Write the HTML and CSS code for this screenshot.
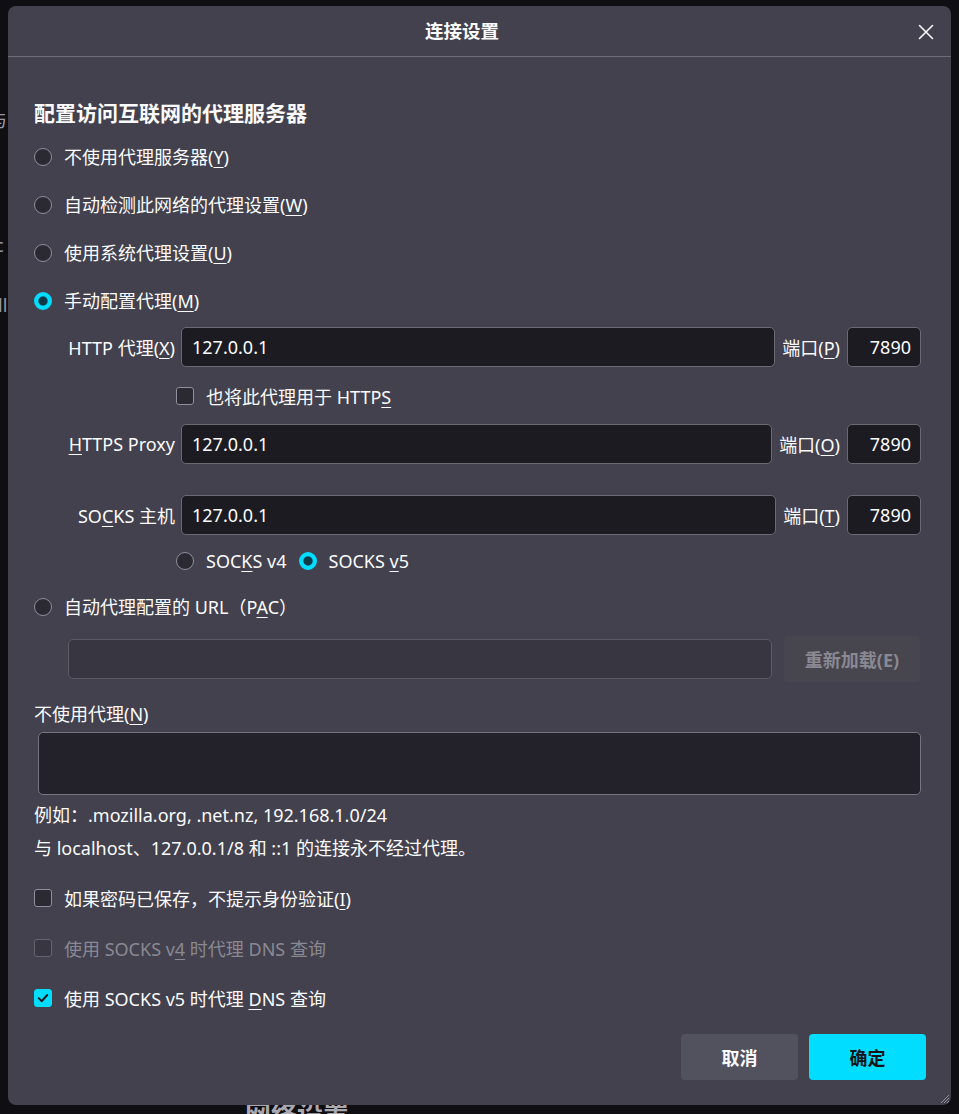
FILE: index.html
```html
<!DOCTYPE html>
<html lang="zh-CN">
<head>
<meta charset="utf-8">
<title>连接设置</title>
<link rel="stylesheet" href="styles.css">
</head>
<body>
<div class="page">
  <div class="bg-line bg-l1">与</div>
  <div class="bg-line bg-l2">c</div>
  <div class="bg-line bg-l3">ll</div>
  <div class="page-title">网络设置</div>
</div>

<div class="dialog">
  <header class="dlg-head">
    <span class="dlg-title">连接设置</span>
    <span class="close" aria-label="关闭">
      <svg width="16" height="16" viewBox="0 0 16 16"><path d="M1.5 1.5 L14.5 14.5 M14.5 1.5 L1.5 14.5" stroke="#fbfbfe" stroke-width="1.6" stroke-linecap="round" fill="none"/></svg>
    </span>
  </header>

  <div class="dlg-body">
    <h2 class="heading">配置访问互联网的代理服务器</h2>

    <div class="opt first"><span class="radio"></span><span>不使用代理服务器(<u>Y</u>)</span></div>
    <div class="opt"><span class="radio"></span><span>自动检测此网络的代理设置(<u>W</u>)</span></div>
    <div class="opt"><span class="radio"></span><span>使用系统代理设置(<u>U</u>)</span></div>
    <div class="opt"><span class="radio checked"></span><span>手动配置代理(<u>M</u>)</span></div>

    <div class="proxy">
      <div class="prow r-http">
        <span class="plabel">HTTP 代理(<u>X</u>)</span>
        <div class="field">127.0.0.1</div>
        <span class="portlabel">端口(<u>P</u>)</span>
        <div class="field port">7890</div>
      </div>
      <div class="subrow r-also">
        <span class="check"></span><span>也将此代理用于 HTTP<u>S</u></span>
      </div>
      <div class="prow r-https">
        <span class="plabel"><u>H</u>TTPS Proxy</span>
        <div class="field">127.0.0.1</div>
        <span class="portlabel">端口(<u>O</u>)</span>
        <div class="field port">7890</div>
      </div>
      <div class="prow r-socks">
        <span class="plabel">SO<u>C</u>KS 主机</span>
        <div class="field">127.0.0.1</div>
        <span class="portlabel">端口(<u>T</u>)</span>
        <div class="field port">7890</div>
      </div>
      <div class="subrow r-ver">
        <span class="radio"></span><span>SOC<u>K</u>S v4</span>
        <span class="radio checked v5"></span><span>SOCKS <u>v</u>5</span>
      </div>
    </div>

    <div class="opt r-pac"><span class="radio"></span><span>自动代理配置的 URL（P<u>A</u>C）</span></div>
    <div class="pac-row">
      <div class="field disabled"></div>
      <span class="btn reload">重新加载(E)</span>
    </div>

    <div class="noproxy-label">不使用代理(<u>N</u>)</div>
    <div class="textarea"></div>
    <div class="hint first">例如：.mozilla.org, .net.nz, 192.168.1.0/24</div>
    <div class="hint">与 localhost、127.0.0.1/8 和 ::1 的连接永不经过代理。</div>

    <div class="crow first"><span class="check"></span><span>如果密码已保存，不提示身份验证(<u>I</u>)</span></div>
    <div class="crow disabled"><span class="check"></span><span>使用 SOCKS v<u>4</u> 时代理 DNS 查询</span></div>
    <div class="crow"><span class="check checked"><svg width="18" height="18" viewBox="0 0 18 18"><path d="M4.2 9.2 L7.6 12.6 L13.8 5.6" stroke="#15141a" stroke-width="2.2" fill="none" stroke-linecap="round" stroke-linejoin="round"/></svg></span><span>使用 SOCKS v5 时代理 <u>D</u>NS 查询</span></div>

    <div class="actions">
      <span class="btn cancel">取消</span>
      <span class="btn ok">确定</span>
    </div>
  </div>

  <span class="grip">
    <svg width="10" height="10" viewBox="0 0 10 10"><path d="M9 1 L1 9 M9 4 L4 9 M9 7 L7 9" stroke="#8f8f9d" stroke-width="1" fill="none"/></svg>
  </span>
</div>
</body>
</html>
```

FILE: styles.css
```css
* { box-sizing: border-box; }

html, body {
  margin: 0;
  padding: 0;
}

body {
  width: 959px;
  height: 1114px;
  overflow: hidden;
  position: relative;
  background: #0f0e13;
  color: #fbfbfe;
  font-family: "Noto Sans", "Noto Sans CJK SC", sans-serif;
  font-size: 18px;
}

u { text-decoration: underline; text-underline-offset: 3px; text-decoration-thickness: 1px; }

/* underlying page peeking out */
.page {
  display: flex;
  flex-direction: column;
  color: #9a99a3;
  font-size: 18px;
}
.bg-line { line-height: 24px; height: 24px; }
.bg-l1 { margin: 108px 0 0 -11px; }
.bg-l2 { margin: 101px 0 0 -5px; }
.bg-l3 { margin: 36px 0 0 -2px; }
.page-title {
  margin-top: 782px;
  padding-left: 245px;
  font-size: 26px;
  line-height: 30px;
  font-weight: 700;
  color: #a9a8b1;
}

/* dialog */
.dialog {
  position: absolute;
  left: 8px;
  top: 6px;
  width: 943px;
  height: 1099px;
  background: #42414d;
  border-radius: 8px;
  display: flex;
  flex-direction: column;
}

.dlg-head {
  flex: none;
  height: 51px;
  border-bottom: 1px solid #6f6e78;
  display: flex;
  align-items: center;
  justify-content: center;
  padding-right: 35px;
  position: relative;
}
.dlg-title {
  font-size: 18.5px;
  font-weight: 700;
  line-height: 24px;
}
.close {
  position: absolute;
  right: 17px;
  top: 18px;
  width: 16px;
  height: 16px;
  display: block;
}
.close svg { display: block; }

.dlg-body {
  padding: 0 30px 0 26px;
  display: flex;
  flex-direction: column;
}

.heading {
  margin: 42px 0 0;
  font-size: 21px;
  line-height: 28px;
  font-weight: 700;
}

.opt {
  height: 48px;
  display: flex;
  align-items: center;
  gap: 12px;
  line-height: 24px;
}
.opt.first { margin-top: 6px; }

.radio {
  flex: none;
  width: 18px;
  height: 18px;
  border-radius: 50%;
  border: 1px solid #8f8f9d;
  background: #2b2a33;
}
.radio.checked {
  border: 4.5px solid #00ddff;
  background: radial-gradient(circle, #0e3a47 0 55%, #00ddff 80%);
}

.check {
  flex: none;
  width: 18px;
  height: 18px;
  border-radius: 3px;
  border: 1px solid #8f8f9d;
  background: #2b2a33;
  display: flex;
  align-items: center;
  justify-content: center;
}
.check.checked {
  background: #00ddff;
  border-color: #00ddff;
}
.check svg { display: block; }

/* proxy grid */
.proxy {
  margin-left: 30px;
  display: flex;
  flex-direction: column;
}
.prow {
  height: 40px;
  display: flex;
  align-items: center;
}
.r-http { margin-top: 2px; }
.r-https { margin-top: 8px; }
.r-socks { margin-top: 31px; }

.plabel {
  flex: none;
  width: 111px;
  margin-right: 6px;
  text-align: right;
  white-space: nowrap;
}
.field {
  flex: 1;
  height: 40px;
  background: #1c1b22;
  border: 1px solid #6b6a74;
  border-radius: 5px;
  padding: 0 10px;
  display: flex;
  align-items: center;
  white-space: nowrap;
}
.portlabel {
  flex: none;
  margin: 0 7px 0 7px;
  white-space: nowrap;
}
.field.port {
  flex: none;
  width: 74px;
  justify-content: flex-end;
  padding-right: 9px;
}

.subrow {
  display: flex;
  align-items: center;
  gap: 12px;
  padding-left: 112px;
}
.r-also { margin-top: 9px; height: 40px; }
.r-ver { margin-top: 10px; height: 32px; }

.r-pac { margin-top: 6px; }

.pac-row {
  margin: 5px 1px 0 34px;
  height: 46px;
  display: flex;
  align-items: center;
  gap: 12px;
}
.field.disabled {
  background: #383741;
  border-color: #5c5b65;
}

.btn {
  flex: none;
  display: flex;
  align-items: center;
  justify-content: center;
  height: 46px;
  border-radius: 4px;
  font-weight: 700;
  font-size: 18px;
}
.reload {
  width: 136px;
  background: #47464f;
  color: #8a8993;
}

.noproxy-label {
  margin-top: 18px;
  line-height: 28px;
}
.textarea {
  margin: 4px 0 0 4px;
  height: 63px;
  background: #23222b;
  border: 1px solid #77767f;
  border-radius: 5px;
}
.hint {
  line-height: 33px;
  white-space: nowrap;
}
.hint.first { margin-top: 4px; }

.crow {
  height: 50px;
  display: flex;
  align-items: center;
  gap: 12px;
}
.crow.first { margin-top: 8px; }
.crow.disabled { color: #8a8993; }
.crow.disabled .check { opacity: 0.45; }

.actions {
  margin: 11px -5px 0 0;
  display: flex;
  justify-content: flex-end;
  gap: 11px;
}
.cancel {
  width: 117px;
  background: #52515e;
  color: #fbfbfe;
}
.ok {
  width: 117px;
  background: #00ddff;
  color: #15141a;
}

.grip {
  position: absolute;
  right: 1px;
  bottom: 1px;
  width: 10px;
  height: 10px;
}
.grip svg { display: block; }
```
